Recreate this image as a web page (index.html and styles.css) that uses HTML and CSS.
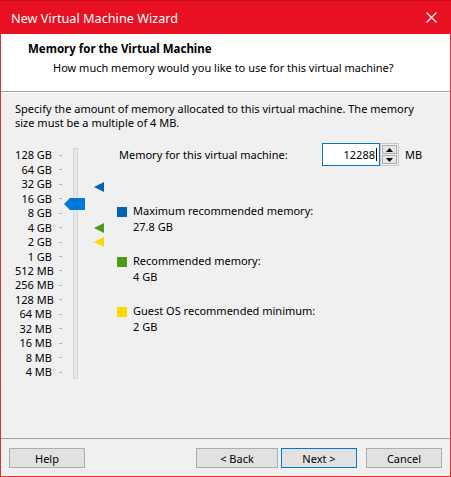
FILE: index.html
```html
<!DOCTYPE html>
<html>
<head>
<meta charset="utf-8">
<link rel="stylesheet" href="styles.css">
</head>
<body>
<div class="window">
  <div class="titlebar">
    <span class="title">New Virtual Machine Wizard</span>
    <svg class="close" width="11" height="11" viewBox="0 0 11 11"><path d="M0.5 0.5 L10.5 10.5 M10.5 0.5 L0.5 10.5" stroke="#fff" stroke-width="1.1" fill="none"/></svg>
  </div>
  <div class="header">
    <div class="h-title">Memory for the Virtual Machine</div>
    <div class="h-sub">How much memory would you like to use for this virtual machine?</div>
  </div>
  <div class="content">
    <p class="desc">Specify the amount of memory allocated to this virtual machine. The memory<br>size must be a multiple of 4 MB.</p>
    <div class="main">
      <div class="scale">
        <div class="rows">
          <div class="row"><span class="lbl">128 GB</span><i class="tick"></i></div>
          <div class="row"><span class="lbl">64 GB</span><i class="tick"></i></div>
          <div class="row"><span class="lbl">32 GB</span><i class="tick"></i></div>
          <div class="row"><span class="lbl">16 GB</span><i class="tick"></i></div>
          <div class="row"><span class="lbl">8 GB</span><i class="tick"></i></div>
          <div class="row"><span class="lbl">4 GB</span><i class="tick"></i></div>
          <div class="row"><span class="lbl">2 GB</span><i class="tick"></i></div>
          <div class="row"><span class="lbl">1 GB</span><i class="tick"></i></div>
          <div class="row"><span class="lbl">512 MB</span><i class="tick"></i></div>
          <div class="row"><span class="lbl">256 MB</span><i class="tick"></i></div>
          <div class="row"><span class="lbl">128 MB</span><i class="tick"></i></div>
          <div class="row"><span class="lbl">64 MB</span><i class="tick"></i></div>
          <div class="row"><span class="lbl">32 MB</span><i class="tick"></i></div>
          <div class="row"><span class="lbl">16 MB</span><i class="tick"></i></div>
          <div class="row"><span class="lbl">8 MB</span><i class="tick"></i></div>
          <div class="row"><span class="lbl">4 MB</span><i class="tick"></i></div>
        </div>
        <div class="track"></div>
        <svg class="thumb" width="21" height="12" viewBox="0 0 21 12"><polygon points="0,6 6,0 21,0 21,12 6,12" fill="#0078d7"/></svg>
        <svg class="marker m-max" width="10" height="10" viewBox="0 0 10 10"><polygon points="0,5 10,0 10,10" fill="#0063b1"/></svg>
        <svg class="marker m-rec" width="10" height="10" viewBox="0 0 10 10"><polygon points="0,5 10,0 10,10" fill="#4f9a14"/></svg>
        <svg class="marker m-min" width="10" height="10" viewBox="0 0 10 10"><polygon points="0,5 10,0 10,10" fill="#fcd700"/></svg>
      </div>
      <div class="panel">
        <div class="mem-row">
          <span class="mem-label">Memory for this virtual machine:</span>
          <div class="input"><span class="val">12288</span><span class="caret"></span></div>
          <div class="spin">
            <div class="spin-btn"><svg width="7" height="4" viewBox="0 0 7 4"><polygon points="0,4 3.5,0 7,4" fill="#000"/></svg></div>
            <div class="spin-btn"><svg width="7" height="4" viewBox="0 0 7 4"><polygon points="0,0 7,0 3.5,4" fill="#000"/></svg></div>
          </div>
          <span class="unit">MB</span>
        </div>
        <div class="legend">
          <div class="item"><i class="sq sq-max"></i><div><div>Maximum recommended memory:</div><div>27.8 GB</div></div></div>
          <div class="item"><i class="sq sq-rec"></i><div><div>Recommended memory:</div><div>4 GB</div></div></div>
          <div class="item"><i class="sq sq-min"></i><div><div>Guest OS recommended minimum:</div><div>2 GB</div></div></div>
        </div>
      </div>
    </div>
  </div>
  <div class="footer">
    <button class="btn btn-help">Help</button>
    <div class="spacer"></div>
    <button class="btn btn-back">&lt; Back</button>
    <button class="btn btn-next">Next &gt;</button>
    <button class="btn btn-cancel">Cancel</button>
  </div>
</div>
</body>
</html>
```
FILE: styles.css
```css
* { box-sizing: border-box; }
html, body { margin: 0; padding: 0; background: #f0f0f0; }
body {
  font-family: "Noto Sans", "Open Sans", sans-serif;
  font-size: 11px;
  color: #000;
}
.window {
  width: 451px;
  height: 477px;
  border: 1px solid #e0303a;
  border-top: 0;
  display: flex;
  flex-direction: column;
  background: #f0f0f0;
}
.titlebar {
  height: 34px;
  margin: 0 -1px;
  background: #e81123;
  border-top: 1px solid #c50f1f;
  color: #fff;
  display: flex;
  align-items: center;
  justify-content: space-between;
  padding: 0 14px 0 11px;
}
.title { font-size: 12.7px; line-height: 16px; }
.close { display: block; }
.header {
  height: 58px;
  background: #fff;
  border-bottom: 1px solid #a0a0a0;
  box-shadow: 0 1px 0 #fff;
  padding: 7px 0 0 27px;
  flex-shrink: 0;
}
.h-title { font-weight: bold; font-size: 11.5px; line-height: 16px; }
.h-sub { line-height: 16px; margin-top: 3px; padding-left: 25px; }
.content {
  flex: 1;
  padding: 10px 14px 0 14px;
}
.desc { margin: 0; line-height: 14px; }
.main {
  display: flex;
  align-items: flex-start;
  margin-top: 13px;
}
.scale {
  position: relative;
  width: 102px;
  flex-shrink: 0;
  margin-top: 5px;
  display: flex;
  align-items: flex-start;
}
.rows { display: flex; flex-direction: column; }
.row {
  height: 14.47px;
  display: flex;
  align-items: center;
}
.lbl { width: 37px; text-align: right; line-height: 14px; white-space: nowrap; }
.tick { display: block; width: 3px; height: 1px; background: #b4b4b4; margin-left: 7px; }
.track {
  width: 5px;
  height: 231px;
  margin-left: 11px;
  background: #e7e7e7;
  border: 1px solid #d6d6d6;
}
.thumb { position: absolute; left: 49px; top: 50px; }
.marker { position: absolute; left: 79px; }
.m-max { top: 34px; }
.m-rec { top: 75px; }
.m-min { top: 89px; }
.panel { flex: 1; display: flex; flex-direction: column; }
.mem-row { display: flex; align-items: center; height: 23px; }
.mem-label { width: 205px; padding-left: 2px; white-space: nowrap; }
.input {
  width: 58px;
  height: 23px;
  background: #fff;
  border: 1px solid #0078d7;
  display: flex;
  align-items: center;
  justify-content: flex-end;
  padding-right: 2px;
}
.caret { width: 1px; height: 13px; background: #000; margin-left: 1px; }
.spin {
  width: 19px;
  height: 23px;
  display: flex;
  flex-direction: column;
  border: 1px solid #c8c8c8;
  background: #f0f0f0;
  padding: 1px;
  gap: 1px;
}
.spin-btn {
  flex: 1;
  background: #e5e5e5;
  border: 1px solid #adadad;
  display: flex;
  align-items: center;
  justify-content: center;
}
.spin-btn svg { display: block; }
.unit { margin-left: 6px; }
.legend { margin-top: 37px; display: flex; flex-direction: column; gap: 18px; }
.item {
  display: grid;
  grid-template-columns: 10px 1fr;
  column-gap: 6px;
  line-height: 16px;
}
.sq { display: block; width: 10px; height: 10px; margin-top: 4px; }
.sq-max { background: #0063b1; }
.sq-rec { background: #4f9a14; }
.sq-min { background: #fcd700; }
.footer {
  height: 38px;
  flex-shrink: 0;
  border-top: 1px solid #a0a0a0;
  display: flex;
  align-items: flex-start;
  padding: 9px 8px 0 8px;
}
.spacer { flex: 1; }
.btn {
  height: 20px;
  margin: 0;
  padding: 0;
  font-family: inherit;
  font-size: 11px;
  color: #000;
  background: #e1e1e1;
  border: 1px solid #adadad;
  border-radius: 0;
}
.btn-help { width: 76px; }
.btn-back { width: 82px; }
.btn-next { width: 76px; margin-left: 3px; border-color: #0078d7; }
.btn-cancel { width: 76px; margin-left: 9px; }
```
